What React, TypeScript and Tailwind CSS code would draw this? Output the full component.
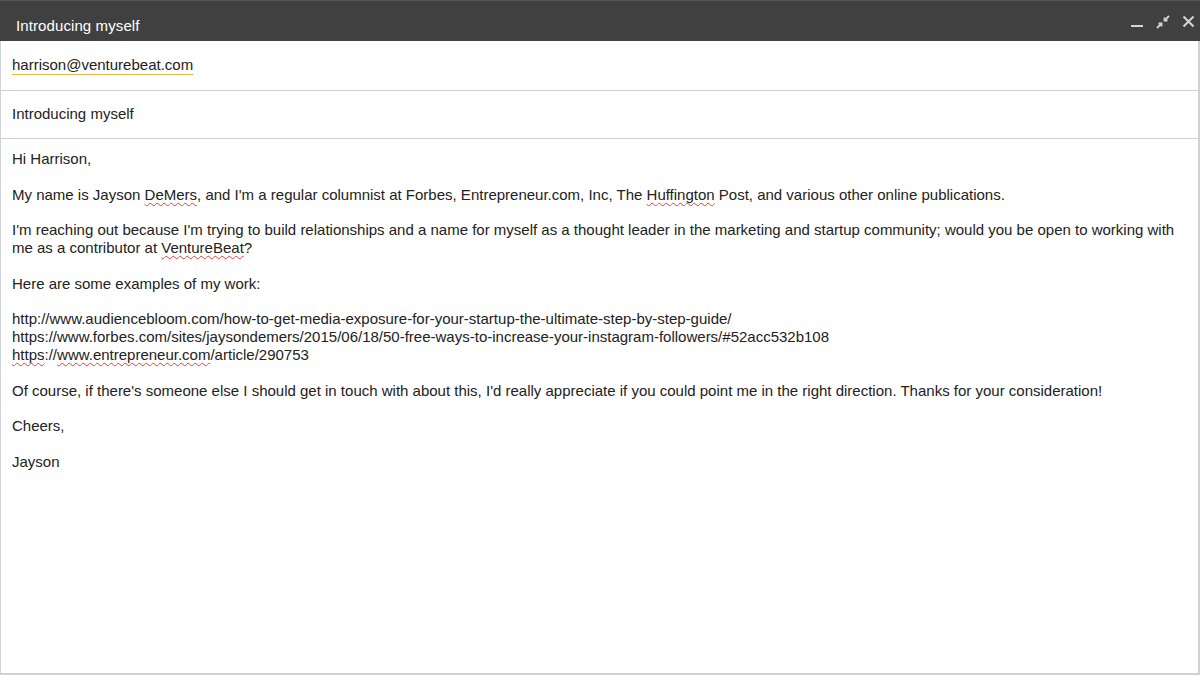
import React from "react";

const Spell = ({ children }: { children: React.ReactNode }) => (
  <span className="underline decoration-wavy decoration-[#e0403a] decoration-1 underline-offset-[2px] [text-decoration-skip-ink:none]">
    {children}
  </span>
);

const MinimizeIcon = () => (
  <svg width="14" height="14" viewBox="0 0 14 14">
    <rect x="1" y="10" width="12" height="2" fill="#d4d4d4" />
  </svg>
);

const ExitFullIcon = () => (
  <svg width="14" height="14" viewBox="0 0 14 14" fill="none" stroke="#d4d4d4" strokeWidth="1.8">
    <path d="M1 13 L5.5 8.5" />
    <path d="M2.5 8.5 H5.5 V11.5" />
    <path d="M13 1 L8.5 5.5" />
    <path d="M8.5 2.5 V5.5 H11.5" />
  </svg>
);

const CloseIcon = () => (
  <svg width="13" height="13" viewBox="0 0 13 13" stroke="#d4d4d4" strokeWidth="2">
    <path d="M1.5 1.5 L11.5 11.5 M11.5 1.5 L1.5 11.5" />
  </svg>
);

export default function App() {
  return (
    <div
      className="w-[1200px] h-[675px] flex flex-col bg-white text-[#222] overflow-hidden"
      style={{ fontFamily: '"Liberation Sans", Arial, sans-serif' }}
    >
      {/* Header */}
      <div className="h-[41px] shrink-0 bg-[#404040] border-t border-[#555] flex items-center justify-between pl-4 pr-[5px]">
        <span className="text-white text-[15px] pt-[10px] tracking-[0.1px]">Introducing myself</span>
        <div className="flex items-center gap-3 pt-[1px]">
          <MinimizeIcon />
          <ExitFullIcon />
          <CloseIcon />
        </div>
      </div>

      <div className="flex-1 flex flex-col border-r-2 border-b-2 border-[#d0d0d0] border-l border-l-[#cfd2d6]">
        {/* To */}
        <div className="h-[50px] shrink-0 flex items-center px-[11px] border-b border-[#cfcfcf]">
          <span className="text-[15px] underline decoration-[#e8b54c] decoration-1 underline-offset-[4px]">
            harrison@venturebeat.com
          </span>
        </div>

        {/* Subject */}
        <div className="h-[48px] shrink-0 flex items-center px-[11px] border-b border-[#cfcfcf]">
          <span className="text-[15px]">Introducing myself</span>
        </div>

        {/* Body */}
        <div className="flex-1 px-[11px] pt-[11px] text-[15px] leading-[18px] flex flex-col gap-[17.5px]">
          <p>Hi Harrison,</p>
          <p>
            My name is Jayson <Spell>DeMers</Spell>, and I'm a regular columnist at Forbes, Entrepreneur.com, Inc, The{" "}
            <Spell>Huffington</Spell> Post, and various other online publications.
          </p>
          <p className="pr-2">
            I'm reaching out because I'm trying to build relationships and a name for myself as a thought leader in the
            marketing and startup community; would you be open to working with me as a contributor at{" "}
            <Spell>VentureBeat</Spell>?
          </p>
          <p>Here are some examples of my work:</p>
          <div>
            <p>http://www.audiencebloom.com/how-to-get-media-exposure-for-your-startup-the-ultimate-step-by-step-guide/</p>
            <p>https://www.forbes.com/sites/jaysondemers/2015/06/18/50-free-ways-to-increase-your-instagram-followers/#52acc532b108</p>
            <p>
              <Spell>https</Spell>://<Spell>www.entrepreneur.com</Spell>/article/290753
            </p>
          </div>
          <p>
            Of course, if there's someone else I should get in touch with about this, I'd really appreciate if you could
            point me in the right direction. Thanks for your consideration!
          </p>
          <p>Cheers,</p>
          <p>Jayson</p>
        </div>
      </div>
    </div>
  );
}
